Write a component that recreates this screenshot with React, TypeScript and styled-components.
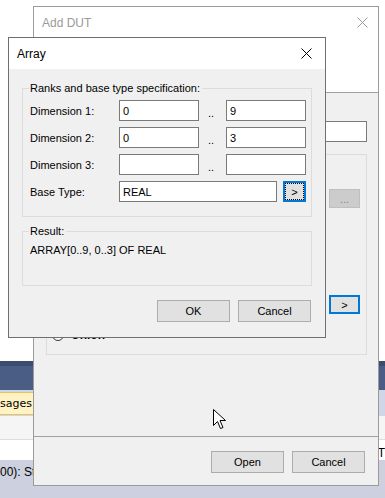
import React from "react";
import styled, { createGlobalStyle, css } from "styled-components";

const GlobalStyle = createGlobalStyle`
  html, body { margin: 0; padding: 0; background: #ffffff; }
  body { font-family: "Liberation Sans", Arial, sans-serif; font-size: 11px; color: #000; }
  * { box-sizing: border-box; }
`;

const Desktop = styled.div`
  position: relative;
  width: 385px;
  height: 498px;
  overflow: hidden;
  display: flex;
  flex-direction: column;
  background: #ffffff;
`;

/* ---------- IDE background ---------- */
const EditorArea = styled.div`
  height: 361px;
  background: #ffffff;
`;

const PanelHeader = styled.div`
  height: 29px;
  background: linear-gradient(#3b4c6e 0 5px, #4a5d85 5px);
`;

const TabStrip = styled.div`
  height: 26px;
  background: #cfd6e7;
  display: flex;
  align-items: flex-start;
  padding-top: 2px;
`;

const Tab = styled.div`
  width: 34px;
  height: 23px;
  background: #fff3c4;
  border: 1px solid #e6c35f;
  border-left: none;
  display: flex;
  align-items: center;
  justify-content: flex-end;
  overflow: hidden;
  white-space: nowrap;
  padding-right: 1px;
`;

const TabText = styled.span`
  flex-shrink: 0;
  font-family: "DejaVu Sans", sans-serif;
  font-size: 11px;
`;

const ToolRow = styled.div`
  height: 24px;
  background: #f5f5f5;
  border-bottom: 1px solid #dddddd;
`;

const WhiteRow = styled.div`
  height: 20px;
  background: #ffffff;
  display: flex;
  align-items: flex-end;
  justify-content: flex-end;
  font-size: 12px;
  overflow: hidden;
`;

const StatusRow = styled.div`
  flex: 1;
  background: #cdd0de;
  padding: 5px 0 0 0;
  font-size: 12px;
  white-space: nowrap;
`;

/* ---------- Windows ---------- */
const Window = styled.div<{ $x: number; $y: number; $w: number; $h: number; $active?: boolean }>`
  position: absolute;
  left: ${(p) => p.$x}px;
  top: ${(p) => p.$y}px;
  width: ${(p) => p.$w}px;
  height: ${(p) => p.$h}px;
  border: 1px solid ${(p) => (p.$active ? "#6f6f6f" : "#9b9b9b")};
  background: #f0f0f0;
  display: flex;
  flex-direction: column;
  font-size: 11px;
`;

const TitleBar = styled.div<{ $inactive?: boolean; $pr: number }>`
  height: 31px;
  flex-shrink: 0;
  background: #ffffff;
  display: flex;
  align-items: center;
  justify-content: space-between;
  padding: 0 ${(p) => p.$pr}px 0 8px;
  font-size: 12px;
  color: ${(p) => (p.$inactive ? "#9a9a9a" : "#000000")};
`;

const CloseGlyph = ({ color }: { color: string }) => (
  <svg width="11" height="11" viewBox="0 0 11 11">
    <path d="M0.5 0.5 L10.5 10.5 M10.5 0.5 L0.5 10.5" stroke={color} strokeWidth="1" fill="none" />
  </svg>
);

const HeaderPanel = styled.div`
  height: 55px;
  flex-shrink: 0;
  background: #ffffff;
  border-bottom: 1px solid #a0a0a0;
`;

const DutBody = styled.div`
  flex: 1;
  display: flex;
  flex-direction: column;
  padding: 28px 11px 0 12px;
`;

const Footer = styled.div`
  height: 49px;
  flex-shrink: 0;
  border-top: 1px solid #a0a0a0;
  display: flex;
  justify-content: flex-end;
  gap: 8px;
  padding: 14px 13px 0 0;
`;

const TextBox = styled.div<{ $w?: number }>`
  height: 21px;
  width: ${(p) => (p.$w ? `${p.$w}px` : "auto")};
  background: #ffffff;
  border: 1px solid #7a7a7a;
  padding: 0 3px;
  display: flex;
  align-items: center;
  font-size: 11px;
  white-space: nowrap;
`;

const WideTextBox = styled(TextBox)`
  margin-left: 1px;
`;

const PlainGroup = styled.div`
  margin-top: 12px;
  height: 201px;
  border: 1px solid #dcdcdc;
  display: flex;
  flex-direction: column;
  align-items: flex-end;
  padding: 34px 6px 0 5px;
`;

const Button = styled.div<{ $w?: number; $focus?: boolean; $disabled?: boolean; $h?: number }>`
  width: ${(p) => p.$w ?? 73}px;
  height: ${(p) => p.$h ?? 22}px;
  background: #e1e1e1;
  border: 1px solid #adadad;
  display: flex;
  align-items: center;
  justify-content: center;
  font-size: 11px;
  flex-shrink: 0;
  ${(p) =>
    p.$focus &&
    css`
      border: 2px solid #0078d7;
    `}
  ${(p) =>
    p.$disabled &&
    css`
      background: #cccccc;
      border-color: #bfbfbf;
      color: #838383;
    `}
`;

const FocusRect = styled.span`
  display: flex;
  align-items: center;
  justify-content: center;
  width: 100%;
  height: 100%;
  border: 1px dotted #000000;
`;

const Spacer = styled.div<{ $h: number }>`
  height: ${(p) => p.$h}px;
  flex-shrink: 0;
`;

const RadioRow = styled.div`
  align-self: flex-start;
  display: flex;
  align-items: center;
  gap: 7px;
  margin-top: 14px;
  font-weight: bold;
  font-size: 12px;
`;

const RadioCircle = styled.span`
  width: 12px;
  height: 12px;
  border-radius: 50%;
  border: 1px solid #333333;
  background: #ffffff;
`;

/* ---------- Array dialog ---------- */
const ArrayBody = styled.div`
  flex: 1;
  display: flex;
  flex-direction: column;
  padding: 12px 13px 0 13px;
`;

const GroupBox = styled.fieldset<{ $pb: number }>`
  margin: 0;
  border: 1px solid #dcdcdc;
  padding: 0 4px ${(p) => p.$pb}px 7px;
  min-width: 0;
`;

const Legend = styled.legend`
  padding: 0 2px 0 1px;
  margin-left: -1px;
  font-size: 11px;
  line-height: 14px;
`;

const DimGrid = styled.div`
  display: grid;
  grid-template-columns: 89px 80px 27px 80px;
  grid-auto-rows: 21px;
  row-gap: 6px;
  margin-top: 5px;
  align-items: center;
`;

const Label = styled.span`
  white-space: nowrap;
`;

const Dots = styled.span`
  text-align: left;
  padding-top: 4px;
  padding-left: 9px;
`;

const BaseCell = styled.div`
  grid-column: 2 / 5;
  display: flex;
  gap: 6px;
  align-items: center;
`;

const ResultText = styled.div`
  margin-top: 5px;
  line-height: 14px;
  white-space: nowrap;
`;

const ButtonRow = styled.div`
  display: flex;
  justify-content: flex-end;
  gap: 8px;
  margin-top: 14px;
  padding-right: 1px;
`;

const SecondGroup = styled(GroupBox)`
  margin-top: 7px;
`;

const Cursor = styled.svg`
  position: absolute;
  left: 213px;
  top: 409px;
`;

export default function App() {
  return (
    <>
      <GlobalStyle />
      <Desktop>
        <EditorArea />
        <PanelHeader />
        <TabStrip>
          <Tab>
            <TabText>Messages</TabText>
          </Tab>
        </TabStrip>
        <ToolRow />
        <WhiteRow>T</WhiteRow>
        <StatusRow>00): Started</StatusRow>

        <Window $x={33} $y={6} $w={346} $h={480}>
          <TitleBar $inactive $pr={10}>
            <span>Add DUT</span>
            <CloseGlyph color="#9a9a9a" />
          </TitleBar>
          <HeaderPanel />
          <DutBody>
            <WideTextBox />
            <PlainGroup>
              <Button $w={31} $h={19} $disabled>
                ...
              </Button>
              <Spacer $h={87} />
              <Button $w={31} $h={19} $focus>
                &gt;
              </Button>
              <RadioRow>
                <RadioCircle />
                <span>Union</span>
              </RadioRow>
            </PlainGroup>
          </DutBody>
          <Footer>
            <Button>Open</Button>
            <Button>Cancel</Button>
          </Footer>
        </Window>

        <Window $x={8} $y={37} $w={318} $h={301} $active>
          <TitleBar $pr={13}>
            <span>Array</span>
            <CloseGlyph color="#000000" />
          </TitleBar>
          <ArrayBody>
            <GroupBox $pb={14}>
              <Legend>Ranks and base type specification:</Legend>
              <DimGrid>
                <Label>Dimension 1:</Label>
                <TextBox>0</TextBox>
                <Dots>..</Dots>
                <TextBox>9</TextBox>
                <Label>Dimension 2:</Label>
                <TextBox>0</TextBox>
                <Dots>..</Dots>
                <TextBox>3</TextBox>
                <Label>Dimension 3:</Label>
                <TextBox />
                <Dots>..</Dots>
                <TextBox />
                <Label>Base Type:</Label>
                <BaseCell>
                  <TextBox $w={158}>REAL</TextBox>
                  <Button $w={23} $h={21} $focus>
                    <FocusRect>&gt;</FocusRect>
                  </Button>
                </BaseCell>
              </DimGrid>
            </GroupBox>
            <SecondGroup $pb={28}>
              <Legend>Result:</Legend>
              <ResultText>ARRAY[0..9, 0..3] OF REAL</ResultText>
            </SecondGroup>
            <ButtonRow>
              <Button>OK</Button>
              <Button>Cancel</Button>
            </ButtonRow>
          </ArrayBody>
        </Window>

        <Cursor width="13" height="21" viewBox="0 0 13 21">
          <path
            d="M0.5 0.5 L0.5 16.5 L4.5 12.5 L7.5 19.5 L10 18.5 L7 11.5 L12.5 11.5 Z"
            fill="#ffffff"
            stroke="#000000"
            strokeWidth="1"
            strokeLinejoin="miter"
          />
        </Cursor>
      </Desktop>
    </>
  );
}
